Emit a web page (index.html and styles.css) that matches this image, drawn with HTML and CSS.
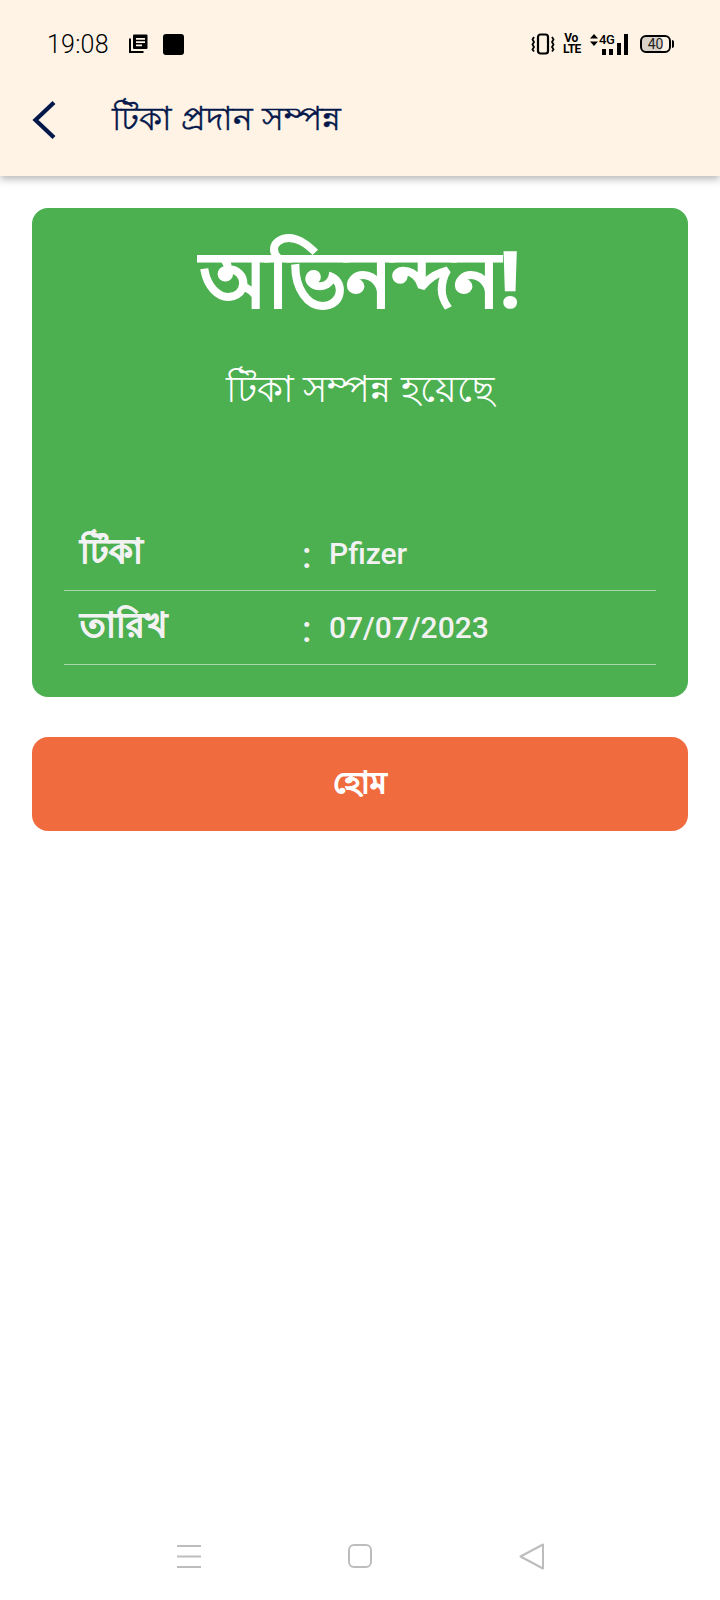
FILE: index.html
```html
<!DOCTYPE html>
<html>
<head>
    <meta charset="UTF-8">
    <meta name="viewport" content="width=device-width, initial-scale=1.0">
    <title>টিকা প্রদান সম্পন্ন</title>
    <link rel="stylesheet" href="styles.css">
</head>
<body>
    <div class="page">
        <header class="top">
            <div class="status">
                <span class="time">19:08</span>
                <svg class="note" width="20" height="20" viewBox="0 0 20 20">
                    <path d="M1 4.5V19H15.5V17H3V4.5Z" fill="#000"/>
                    <path d="M6 0.5H18.5Q19.5 0.5 19.5 1.5V14Q19.5 15 18.5 15H6Q5 15 5 14V1.5Q5 0.5 6 0.5Z" fill="#000"/>
                    <path d="M8 4H17V5.8H8ZM8 7.2H17V9H8ZM8 10.4H14V12.2H8Z" fill="#fff3e6"/>
                </svg>
                <span class="square"></span>
                <div class="status-right">
                    <svg class="vibrate" width="24" height="22" viewBox="0 0 24 22" fill="none" stroke="#000">
                        <rect x="7" y="1.500" width="10" height="19" rx="2.500" stroke-width="2.200"/>
                        <path d="M3 4l-1.500 2.500 1.500 2.500-1.500 2.500 1.500 2.500-1.500 2.500 1.500 2M21 4l1.500 2.500-1.500 2.500 1.500 2.500-1.500 2.500 1.500 2.500-1.500 2" stroke-width="1.800"/>
                    </svg>
                    <div class="volte"><span>Vo</span><span>LTE</span></div>
                    <div class="signal">
                        <div class="net">
                            <svg width="8" height="12" viewBox="0 0 8 12" fill="#000">
                                <path d="M4 0L8 4.500H0ZM4 12L0 7.500H8Z"/>
                            </svg>
                            <span>4G</span>
                        </div>
                        <i class="bar b1"></i><i class="bar b2"></i><i class="bar b3"></i><i class="bar b4"></i>
                    </div>
                    <div class="battery"><span class="level">40</span></div>
                </div>
            </div>
            <div class="toolbar">
                <svg class="back" width="26" height="40" viewBox="0 0 26 40" fill="none">
                    <path d="M24 2.500L5.500 20L24 37.500" stroke="#03174a" stroke-width="4.200"/>
                </svg>
                <h1 class="title">টিকা প্রদান সম্পন্ন</h1>
            </div>
        </header>

        <main class="content">
            <section class="card">
                <h2 class="congrats">অভিনন্দন!</h2>
                <p class="done">টিকা সম্পন্ন হয়েছে</p>
                <div class="row">
                    <span class="label">টিকা</span>
                    <span class="colon">:</span>
                    <span class="value">Pfizer</span>
                </div>
                <div class="row">
                    <span class="label">তারিখ</span>
                    <span class="colon">:</span>
                    <span class="value">07/07/2023</span>
                </div>
            </section>
            <button class="home">হোম</button>
        </main>

        <nav class="navbar">
            <svg width="24" height="24" viewBox="0 0 24 24" stroke="#bdbdbd" stroke-width="2">
                <path d="M0 2H24M0 12.500H24M0 23H24"/>
            </svg>
            <svg width="24" height="24" viewBox="0 0 24 24" fill="none" stroke="#bdbdbd" stroke-width="2">
                <rect x="1" y="1" width="22" height="22" rx="5"/>
            </svg>
            <svg width="25" height="27" viewBox="0 0 25 27" fill="none" stroke="#bdbdbd" stroke-width="2" stroke-linejoin="round">
                <path d="M24 1.500V25.500L1.500 13.500Z"/>
            </svg>
        </nav>
    </div>
</body>
</html>
```

FILE: styles.css
```css
body {
    margin: 0;
    background-color: #fff;
    font-family: Roboto, "Noto Sans", sans-serif;
}

.page {
    display: flex;
    flex-direction: column;
    height: 1600px;
}

.top {
    background-color: #fff3e6;
    box-shadow: 0 3px 8px rgba(0, 0, 0, 0.3);
    height: 176px;
}

.status {
    display: flex;
    align-items: center;
    height: 88px;
    padding: 0 49px 0 47px;
}

.time {
    font-size: 25px;
    font-weight: 300;
    letter-spacing: 0.2px;
    color: #000;
    margin-right: 19px;
}

.note {
    margin-right: 15px;
}

.square {
    width: 21px;
    height: 21px;
    background-color: #000;
    border-radius: 3px;
}

.status-right {
    display: flex;
    align-items: center;
    margin-left: auto;
}

.vibrate {
    margin-right: 8px;
}

.volte {
    display: flex;
    flex-direction: column;
    width: 16px;
    margin-right: 11px;
    font-size: 12px;
    font-weight: 700;
    line-height: 11px;
    letter-spacing: -0.5px;
    text-align: center;
    color: #000;
}

.signal {
    display: flex;
    align-items: flex-end;
    justify-content: flex-end;
    gap: 3.500px;
    height: 22px;
    position: relative;
    width: 38px;
    margin-right: 12px;
}

.net {
    position: absolute;
    left: 0;
    top: 0;
    display: flex;
    align-items: center;
    gap: 1px;
    font-size: 13px;
    font-weight: 500;
    line-height: 13px;
    letter-spacing: -0.5px;
}

.bar {
    width: 4px;
    background-color: #000;
}

.b1 { height: 6px; }
.b2 { height: 6px; }
.b3 { height: 12px; }
.b4 { height: 21px; }

.battery {
    box-sizing: border-box;
    width: 31px;
    height: 18px;
    border: 2px solid #000;
    border-radius: 6px;
    background: linear-gradient(90deg, #d8d2c9 70%, #fff3e6 70%);
    position: relative;
    display: flex;
    align-items: center;
    justify-content: center;
}

.battery::after {
    content: "";
    position: absolute;
    right: -5px;
    top: 3px;
    width: 2px;
    height: 8px;
    background-color: #000;
    border-radius: 0 2px 2px 0;
}

.level {
    font-size: 14px;
    color: #222;
}

.toolbar {
    display: flex;
    align-items: center;
    height: 66px;
    padding-left: 30px;
}

.back {
    margin-right: 56px;
    margin-bottom: 2px;
}

.title {
    margin: 0;
    font-size: 33.200px;
    font-weight: 400;
    letter-spacing: 0.15px;
    color: #03174a;
    -webkit-text-stroke: 0.4px #03174a;
    white-space: nowrap;
}

.content {
    padding: 32px 32px 0;
}

.card {
    background-color: #4caf50;
    border-radius: 16px;
    padding: 33px 32px 32px;
    color: #fff;
    height: 489px;
    box-sizing: border-box;
}

.congrats {
    margin: 0;
    font-size: 77px;
    font-weight: 700;
    line-height: 80px;
    text-align: center;
    -webkit-text-stroke: 1.6px #fff;
}

.done {
    margin: 44px 0 102px;
    font-size: 37px;
    line-height: 50px;
    text-align: center;
}

.row {
    display: flex;
    align-items: center;
    height: 74px;
    box-sizing: border-box;
    border-bottom: 1px solid rgba(255, 255, 255, 0.5);
    padding-left: 16px;
    color: #f2f2f2;
}

.label {
    width: 222px;
    font-size: 33.500px;
    font-weight: 700;
    -webkit-text-stroke: 0.8px #f2f2f2;
}

.colon {
    width: 27px;
    font-size: 36px;
    font-weight: 500;
    line-height: 34px;
    padding-top: 4px;
}

.value {
    font-size: 30px;
    font-weight: 500;
}

.home {
    display: block;
    width: 100%;
    height: 94px;
    margin-top: 40px;
    border: none;
    border-radius: 16px;
    background-color: #f06c3f;
    color: #fff;
    font-family: inherit;
    font-size: 30px;
    font-weight: 700;
    -webkit-text-stroke: 0.8px #fff;
}

.navbar {
    margin-top: auto;
    height: 26px;
    padding-bottom: 31px;
    display: flex;
    align-items: center;
    justify-content: center;
    gap: 147px;
}
```
